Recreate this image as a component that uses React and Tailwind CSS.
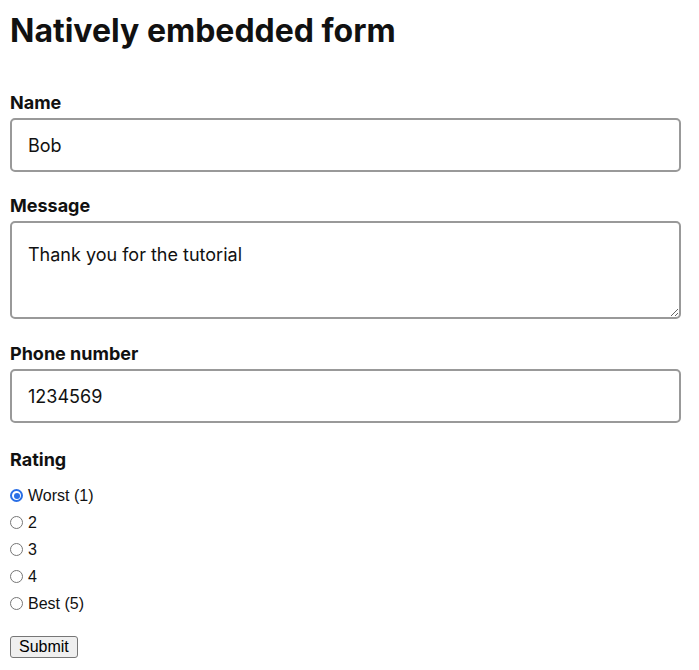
import React from "react";

const inter = { fontFamily: "Inter, 'Noto Sans', sans-serif" };

function Radio({ checked, label }) {
  return (
    <div className="flex items-center h-[27px]">
      {checked ? (
        <span className="w-[13px] h-[13px] rounded-full border-[2px] border-[#2a6fe6] bg-white flex items-center justify-center shrink-0">
          <span className="w-[6px] h-[6px] rounded-full bg-[#2a6fe6]" />
        </span>
      ) : (
        <span className="w-[13px] h-[13px] rounded-full border border-[#767676] bg-white shrink-0" />
      )}
      <span className="ml-[5px] text-[16px] leading-[18px] text-[#111] [font-family:'Liberation_Sans',Arial,sans-serif]">
        {label}
      </span>
    </div>
  );
}

export default function App() {
  const labelCls = "block text-[18px] leading-[22px] font-bold text-[#111] mb-[4px]";
  const inputCls =
    "block w-full h-[54px] border-2 border-[#999] rounded-[5px] px-[16px] text-[18px] text-[#111] bg-white outline-none";
  return (
    <div className="bg-white min-h-[670px] pl-[10px] pr-[18px]" style={inter}>
      <h1 className="pt-[12px] text-[32px] leading-[38px] font-bold text-[#111]">
        Natively embedded form
      </h1>
      <form className="mt-[42px]" onSubmit={(e) => e.preventDefault()}>
        <div className="mb-[23px]">
          <label className={labelCls}>Name</label>
          <input className={inputCls} style={inter} defaultValue="Bob" />
        </div>
        <div className="mb-[24px]">
          <label className={labelCls}>Message</label>
          <textarea
            className="block w-full h-[98px] border-2 border-[#999] rounded-[5px] px-[16px] pt-[21px] text-[18px] leading-[22px] text-[#111] bg-white outline-none"
            style={inter}
            defaultValue="Thank you for the tutorial"
          />
        </div>
        <div className="mb-[26px]">
          <label className={labelCls}>Phone number</label>
          <input className={inputCls} style={inter} defaultValue="1234569" />
        </div>
        <div>
          <div className="text-[18px] leading-[22px] font-bold text-[#111] mb-[11px]">Rating</div>
          <Radio checked label="Worst (1)" />
          <Radio label="2" />
          <Radio label="3" />
          <Radio label="4" />
          <Radio label="Best (5)" />
        </div>
        <button
          type="submit"
          className="mt-[19px] h-[22px] px-[8px] bg-[#efefef] border border-[#767676] rounded-[3px] text-[16px] leading-[18px] text-black [font-family:'Liberation_Sans',Arial,sans-serif]"
        >
          Submit
        </button>
      </form>
    </div>
  );
}
